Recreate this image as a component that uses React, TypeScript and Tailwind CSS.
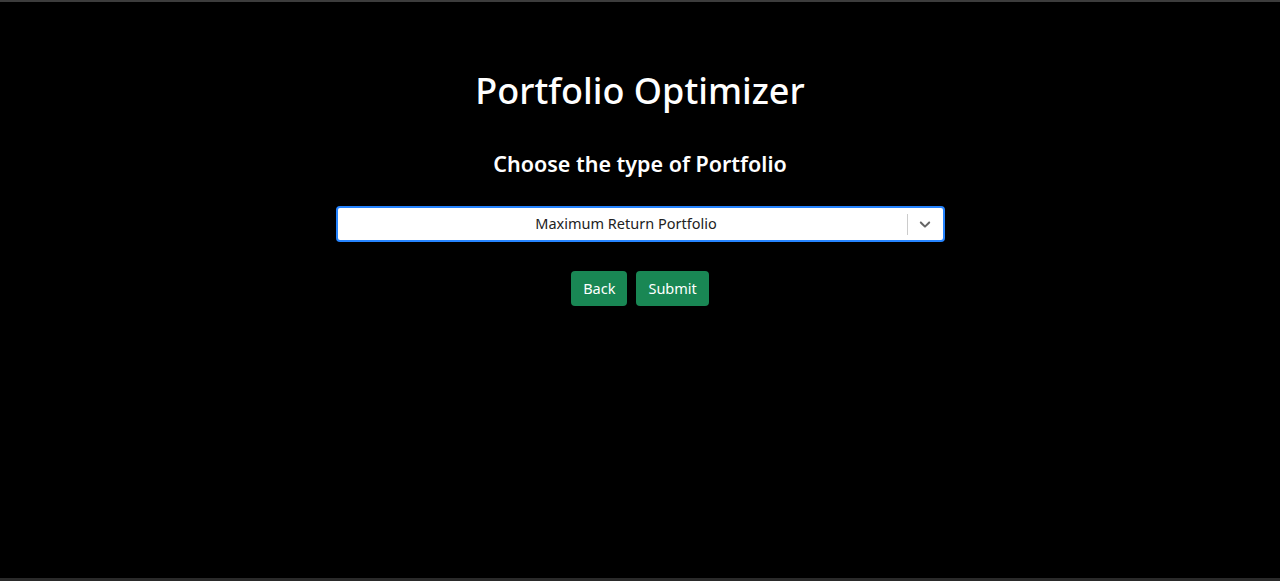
export default function App() {
  return (
    <div
      className="h-[581px] w-full bg-black border-t-2 border-t-[#3c3c3c] border-b-[3px] border-b-[#2a2a2a] flex flex-col items-center text-white"
      style={{ fontFamily: '"Noto Sans", "Open Sans", sans-serif' }}
    >
      <h1 className="mt-[65px] text-[36px] font-medium leading-[48px]">Portfolio Optimizer</h1>
      <h2 className="mt-[35px] text-[21.5px] font-semibold leading-[28px]">Choose the type of Portfolio</h2>
      <div className="mt-[28px] w-[609px] h-[36px] bg-white rounded-[4px] border-2 border-[#2684ff] flex items-center text-[#222] text-[14.5px]">
        <div className="flex-1 text-center pl-[8px]">Maximum Return Portfolio</div>
        <div className="w-px h-[21px] bg-[#cccccc]" />
        <div className="w-[35px] flex items-center justify-center text-[#666]">
          <svg width="18" height="18" viewBox="0 0 20 20" fill="currentColor">
            <path d="M4.516 7.548c0.436-0.446 1.043-0.481 1.576 0l3.908 3.747 3.908-3.747c0.533-0.481 1.141-0.446 1.574 0 0.436 0.445 0.408 1.197 0 1.615-0.406 0.418-4.695 4.502-4.695 4.502-0.217 0.223-0.502 0.335-0.787 0.335s-0.57-0.112-0.789-0.335c0 0-4.287-4.084-4.695-4.502s-0.436-1.17 0-1.615z" />
          </svg>
        </div>
      </div>
      <div className="mt-[29px] flex gap-[9px]">
        <button className="h-[35px] px-[12px] rounded-[4px] bg-[#198754] text-[14.5px] text-white">Back</button>
        <button className="h-[35px] px-[12px] rounded-[4px] bg-[#198754] text-[14.5px] text-white">Submit</button>
      </div>
    </div>
  );
}
